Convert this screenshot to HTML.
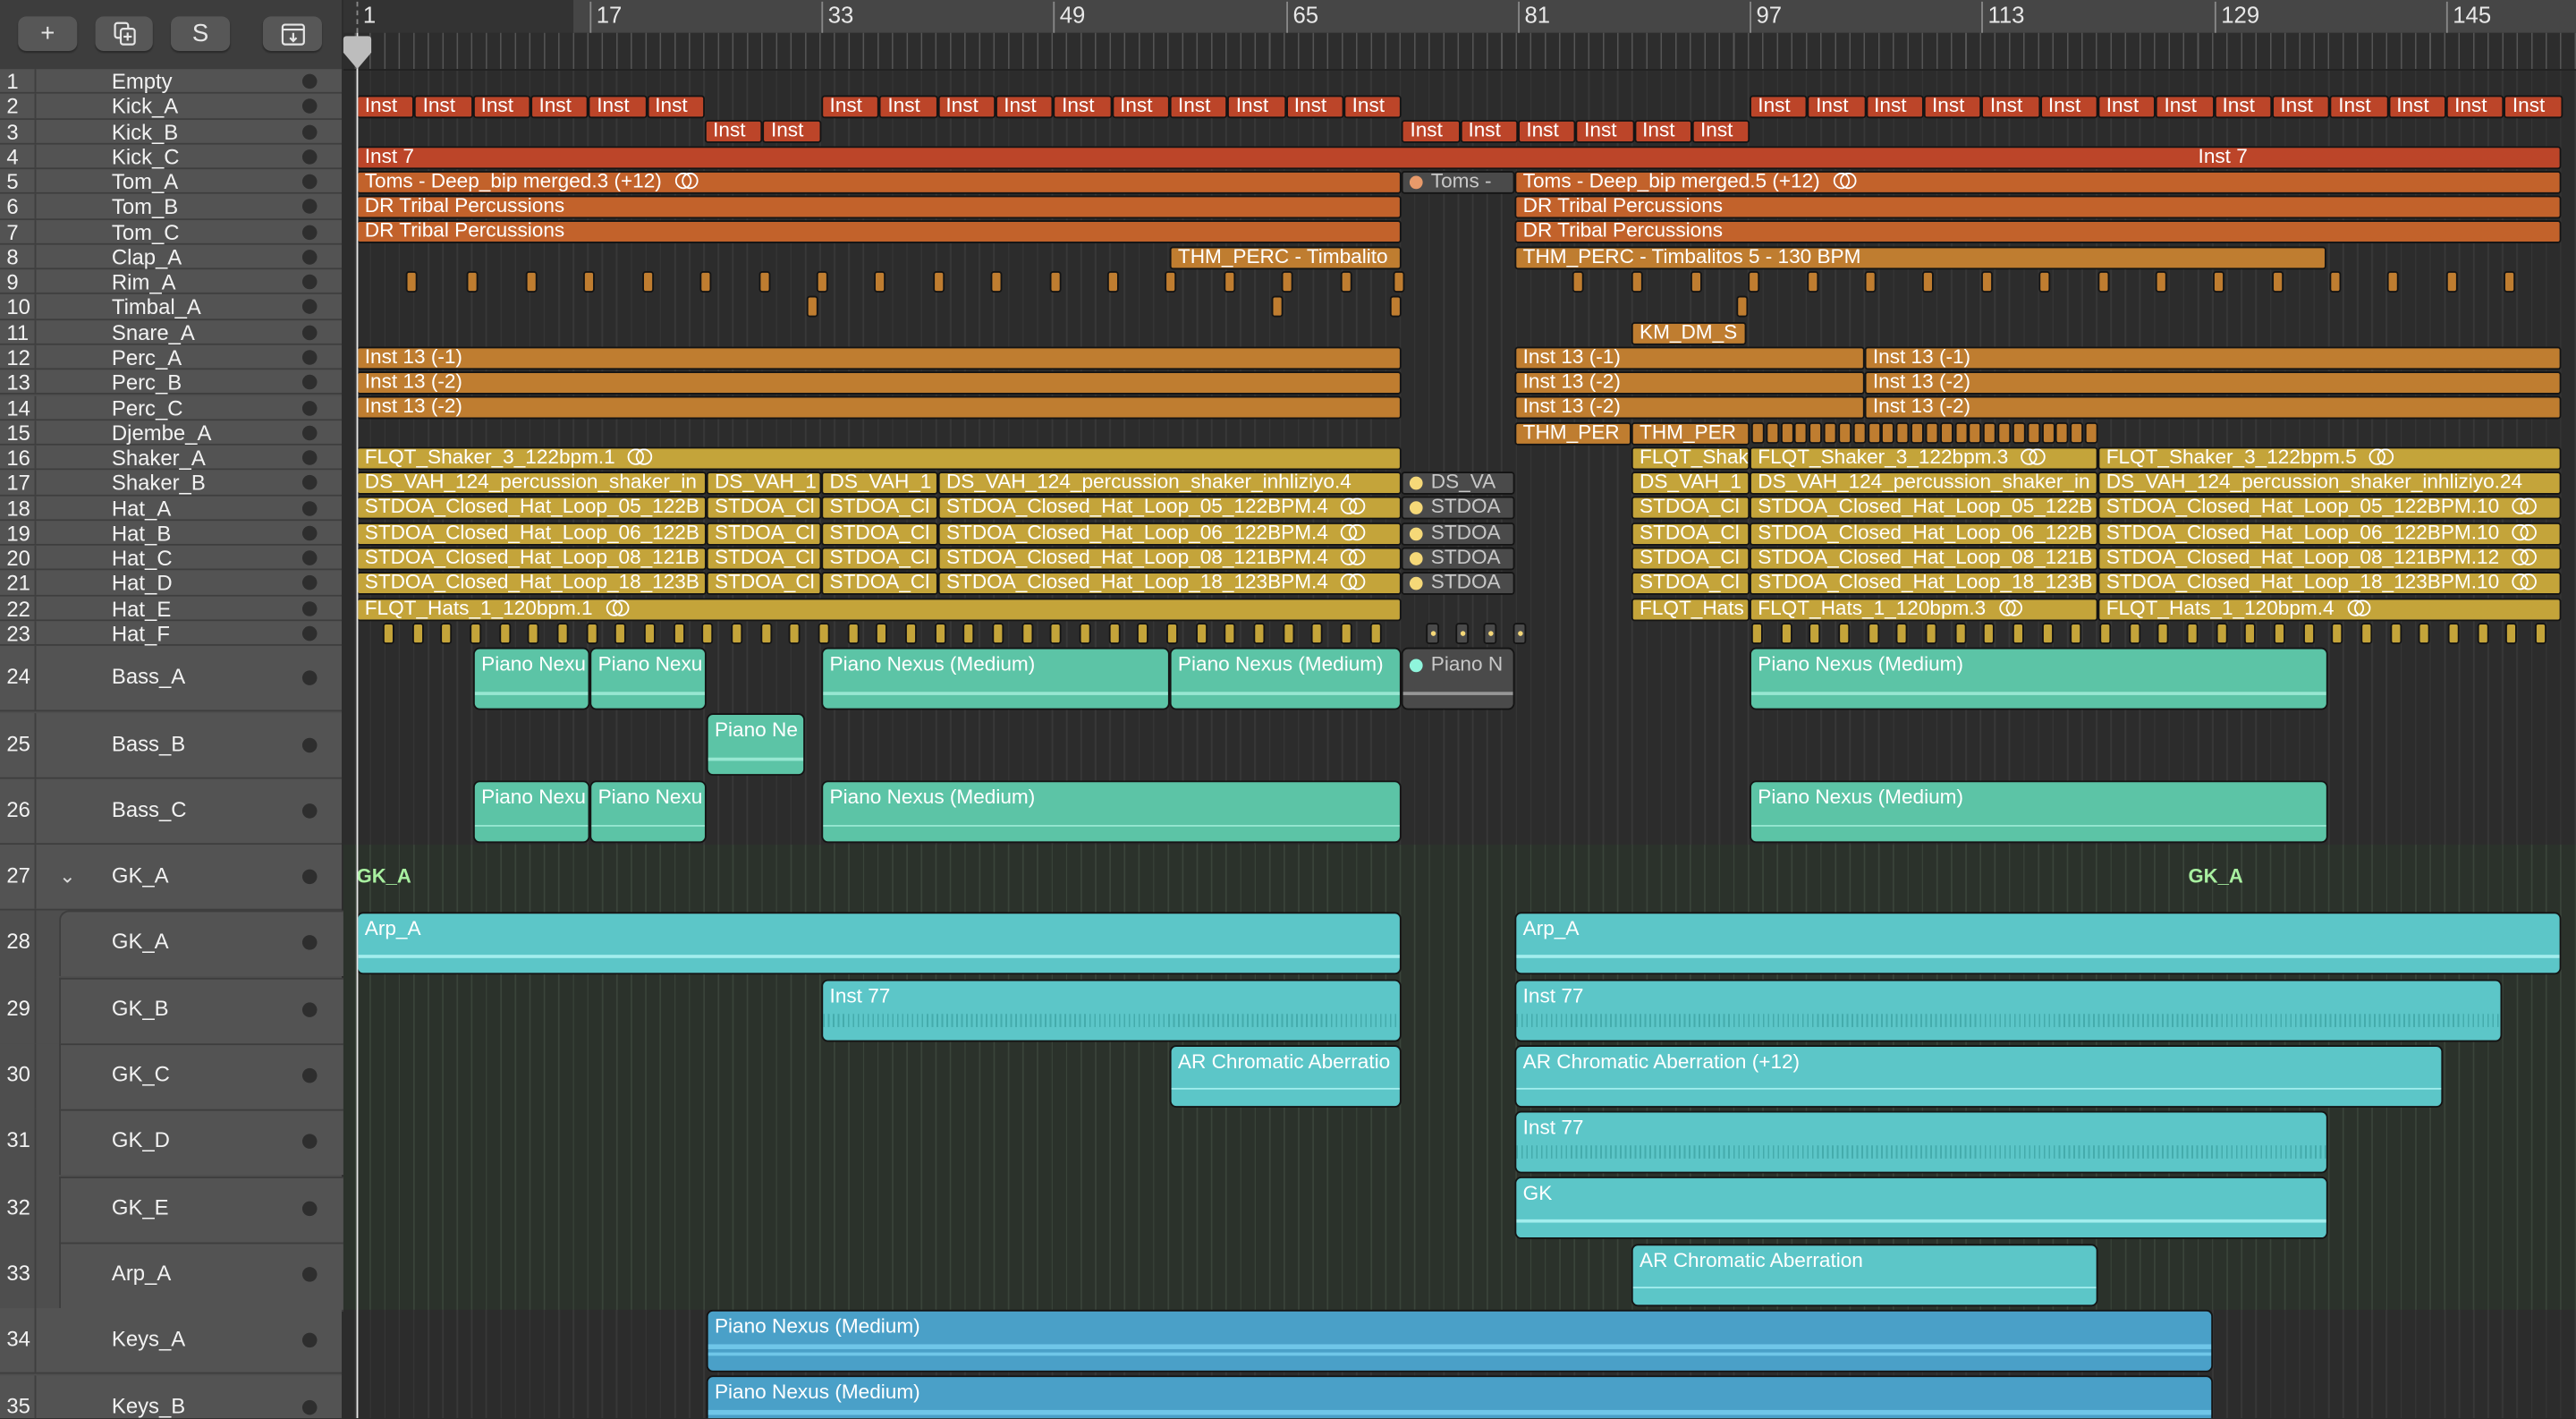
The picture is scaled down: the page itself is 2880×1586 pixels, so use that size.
<!DOCTYPE html>
<html><head><meta charset="utf-8">
<style>
html,body{margin:0;padding:0;background:#2b2b2b;width:2880px;height:1586px;overflow:hidden}
#w{position:absolute;left:0;top:0;width:1568px;height:863px;transform:scale(1.83673);transform-origin:0 0;font-family:"Liberation Sans",sans-serif;overflow:hidden}
#arr{position:absolute;left:208px;top:42px;width:1360px;height:821px;background-color:#2c2c2c;background-image:repeating-linear-gradient(90deg,transparent 0 8px,#383838 8px 8.83px);background-position:9px 0}
#gk{position:absolute;left:208px;top:514px;width:1360px;height:282.5px;background-color:#2b322b;background-image:repeating-linear-gradient(90deg,transparent 0 8px,#3a443a 8px 8.83px);background-position:9px 0}
#lp{position:absolute;left:0;top:0;width:208px;height:863px;background:#4e4e4e;border-right:1px solid #2a2a2a}
#tb{position:absolute;left:0;top:0;width:208px;height:42px;background:#3d3d3d;border-bottom:1px solid #2f2f2f}
.btn{position:absolute;top:10px;height:21px;background:#575757;border-radius:5px;color:#e6e6e6;text-align:center;font-size:15px;line-height:21px;box-shadow:0 1px 1px #0005}
.tr{position:absolute;left:0;width:208px;color:#f2f2f2;font-size:13px}
.tr .n{position:absolute;left:0;width:22px;height:100%;text-align:left;padding-left:4px;box-sizing:border-box;border-right:1px solid #3f3f3f}
.tr .nm{position:absolute;left:68px}
.tr .d{position:absolute;left:184px;width:9px;height:9px;border-radius:50%;background:#2e2e2e}
.tr{border-bottom:1px solid #3e3e3e;box-sizing:border-box;background:#535353}
#rul1{position:absolute;left:208px;top:0;width:1360px;height:20px;background:#333}
#rul1b{position:absolute;left:349px;top:0;width:1219px;height:20px;background:#464646}
#rul2{position:absolute;left:208px;top:20px;width:1360px;height:22px;background:#2d2d2d;background-image:repeating-linear-gradient(90deg,transparent 0 8px,#555 8px 8.83px);background-position:9px 0;border-bottom:1px solid #222}
.bn{position:absolute;top:1px;color:#e8e8e8;font-size:14px;padding-left:3px;border-left:1px solid #888;height:19px;line-height:16px}
.c{position:absolute;box-sizing:border-box;border:1px solid #141414;border-radius:2px;color:#fff;font-size:12.3px;line-height:11px;padding-left:4px;white-space:nowrap;overflow:hidden}
.s{height:14px}
.b{height:38px;border-radius:4px;padding-top:3px;line-height:12.5px}
.R{background:#bc4529}.T{background:#c2622b}.P{background:#bf7d30}.G{background:#c4a43a}
.M{background:#4a4a4a;color:#c8c8c8}.V{background:#5cc4a6}.C{background:#5cc6c8}.K{background:#4aa0c8}
.tk{position:absolute;width:7px;height:13px;border:1px solid #141414;border-radius:2px;box-sizing:border-box}
.wv{position:absolute;left:0;right:0;height:1.5px;background:#a6f0dc;opacity:.8}
.dot{display:inline-block;width:8px;height:8px;border-radius:50%;margin-right:5px;vertical-align:-1px}
.lp{display:inline-block;position:relative;width:15px;height:10px;margin-left:8px;vertical-align:-1px}
.lp:before,.lp:after{content:"";position:absolute;top:0;width:8px;height:8px;border:1.2px solid #fff;border-radius:50%}
.lp:before{left:0}.lp:after{left:4.5px}
</style></head><body><div id="w">
<div id="arr"></div>
<div id="gk"></div>
<div id="rul1"></div><div id="rul1b"></div><div id="rul2"></div>
<div class="bn" style="left:217px;border-left:1px dashed #888">1</div>
<div class="bn" style="left:359px">17</div>
<div class="bn" style="left:500px">33</div>
<div class="bn" style="left:641px">49</div>
<div class="bn" style="left:783px">65</div>
<div class="bn" style="left:924px">81</div>
<div class="bn" style="left:1065px">97</div>
<div class="bn" style="left:1206px">113</div>
<div class="bn" style="left:1348px">129</div>
<div class="bn" style="left:1489px">145</div>

<div id="lp"></div>
<div id="tb">
<div class="btn" style="left:11px;width:36px">+</div>
<div class="btn" style="left:58px;width:35px"><svg width="14" height="15" viewBox="0 0 14 15" style="margin-top:3px"><rect x="1" y="1" width="8" height="9" rx="1.5" fill="none" stroke="#e6e6e6" stroke-width="1.2"/><rect x="4.5" y="4.5" width="8.5" height="9.5" rx="1.5" fill="#575757" stroke="#e6e6e6" stroke-width="1.2"/><path d="M8.7 6.8v5M6.2 9.3h5" stroke="#e6e6e6" stroke-width="1.2"/></svg></div>
<div class="btn" style="left:104px;width:36px">S</div>
<div class="btn" style="left:160px;width:36px"><svg width="15" height="14" viewBox="0 0 15 14" style="margin-top:4px"><rect x="1" y="1" width="13" height="12" rx="1.5" fill="none" stroke="#e6e6e6" stroke-width="1.2"/><path d="M1 4h13M7.5 6v5M5.5 9l2 2 2-2" fill="none" stroke="#e6e6e6" stroke-width="1.2"/></svg></div>
</div>

<div class="tr" style="top:42px;height:15.3px"><span class="n">1</span><span class="nm">Empty</span><span class="d" style="top:3px"></span></div>
<div class="tr" style="top:57.3px;height:15.3px"><span class="n">2</span><span class="nm">Kick_A</span><span class="d" style="top:3px"></span></div>
<div class="tr" style="top:72.5px;height:15.3px"><span class="n">3</span><span class="nm">Kick_B</span><span class="d" style="top:3px"></span></div>
<div class="tr" style="top:87.8px;height:15.3px"><span class="n">4</span><span class="nm">Kick_C</span><span class="d" style="top:3px"></span></div>
<div class="tr" style="top:103.1px;height:15.3px"><span class="n">5</span><span class="nm">Tom_A</span><span class="d" style="top:3px"></span></div>
<div class="tr" style="top:118.4px;height:15.3px"><span class="n">6</span><span class="nm">Tom_B</span><span class="d" style="top:3px"></span></div>
<div class="tr" style="top:133.6px;height:15.3px"><span class="n">7</span><span class="nm">Tom_C</span><span class="d" style="top:3px"></span></div>
<div class="tr" style="top:148.9px;height:15.3px"><span class="n">8</span><span class="nm">Clap_A</span><span class="d" style="top:3px"></span></div>
<div class="tr" style="top:164.2px;height:15.3px"><span class="n">9</span><span class="nm">Rim_A</span><span class="d" style="top:3px"></span></div>
<div class="tr" style="top:179.4px;height:15.3px"><span class="n">10</span><span class="nm">Timbal_A</span><span class="d" style="top:3px"></span></div>
<div class="tr" style="top:194.7px;height:15.3px"><span class="n">11</span><span class="nm">Snare_A</span><span class="d" style="top:3px"></span></div>
<div class="tr" style="top:210px;height:15.3px"><span class="n">12</span><span class="nm">Perc_A</span><span class="d" style="top:3px"></span></div>
<div class="tr" style="top:225.2px;height:15.3px"><span class="n">13</span><span class="nm">Perc_B</span><span class="d" style="top:3px"></span></div>
<div class="tr" style="top:240.5px;height:15.3px"><span class="n">14</span><span class="nm">Perc_C</span><span class="d" style="top:3px"></span></div>
<div class="tr" style="top:255.8px;height:15.3px"><span class="n">15</span><span class="nm">Djembe_A</span><span class="d" style="top:3px"></span></div>
<div class="tr" style="top:271.1px;height:15.3px"><span class="n">16</span><span class="nm">Shaker_A</span><span class="d" style="top:3px"></span></div>
<div class="tr" style="top:286.3px;height:15.3px"><span class="n">17</span><span class="nm">Shaker_B</span><span class="d" style="top:3px"></span></div>
<div class="tr" style="top:301.6px;height:15.3px"><span class="n">18</span><span class="nm">Hat_A</span><span class="d" style="top:3px"></span></div>
<div class="tr" style="top:316.9px;height:15.3px"><span class="n">19</span><span class="nm">Hat_B</span><span class="d" style="top:3px"></span></div>
<div class="tr" style="top:332.1px;height:15.3px"><span class="n">20</span><span class="nm">Hat_C</span><span class="d" style="top:3px"></span></div>
<div class="tr" style="top:347.4px;height:15.3px"><span class="n">21</span><span class="nm">Hat_D</span><span class="d" style="top:3px"></span></div>
<div class="tr" style="top:362.7px;height:15.3px"><span class="n">22</span><span class="nm">Hat_E</span><span class="d" style="top:3px"></span></div>
<div class="tr" style="top:377.9px;height:15.3px"><span class="n">23</span><span class="nm">Hat_F</span><span class="d" style="top:3px"></span></div>
<div class="tr" style="top:393.2px;height:40.3px;line-height:38px"><span class="n">24</span><span class="nm">Bass_A</span><span class="d" style="top:15px"></span></div>
<div class="tr" style="top:433.5px;height:40.3px;line-height:38px"><span class="n">25</span><span class="nm">Bass_B</span><span class="d" style="top:15px"></span></div>
<div class="tr" style="top:473.8px;height:40.3px;line-height:38px"><span class="n">26</span><span class="nm">Bass_C</span><span class="d" style="top:15px"></span></div>
<div class="tr" style="top:514.1px;height:40.3px;line-height:38px"><span class="n">27</span><span style="position:absolute;left:36px;font-size:12px;color:#ddd">&#8964;</span><span class="nm">GK_A</span><span class="d" style="top:15px"></span></div>
<div class="tr" style="top:554.4px;height:40.3px;line-height:38px;background:#4e4e4e;border:0"><span class="n">28</span><span style="position:absolute;left:36px;top:0;width:172px;height:39px;background:#535353;border-top:1px solid #3e3e3e;border-left:1px solid #3e3e3e;border-radius:6px 0 0 0"></span><span class="nm">GK_A</span><span class="d" style="top:15px"></span></div>
<div class="tr" style="top:594.7px;height:40.3px;line-height:38px;background:#4e4e4e;border:0"><span class="n">29</span><span style="position:absolute;left:36px;top:0;width:172px;height:39px;background:#535353;border-top:1px solid #3e3e3e;border-left:1px solid #3e3e3e"></span><span class="nm">GK_B</span><span class="d" style="top:15px"></span></div>
<div class="tr" style="top:635px;height:40.3px;line-height:38px;background:#4e4e4e;border:0"><span class="n">30</span><span style="position:absolute;left:36px;top:0;width:172px;height:39px;background:#535353;border-top:1px solid #3e3e3e;border-left:1px solid #3e3e3e"></span><span class="nm">GK_C</span><span class="d" style="top:15px"></span></div>
<div class="tr" style="top:675.3px;height:40.3px;line-height:38px;background:#4e4e4e;border:0"><span class="n">31</span><span style="position:absolute;left:36px;top:0;width:172px;height:39px;background:#535353;border-top:1px solid #3e3e3e;border-left:1px solid #3e3e3e"></span><span class="nm">GK_D</span><span class="d" style="top:15px"></span></div>
<div class="tr" style="top:715.6px;height:40.3px;line-height:38px;background:#4e4e4e;border:0"><span class="n">32</span><span style="position:absolute;left:36px;top:0;width:172px;height:39px;background:#535353;border-top:1px solid #3e3e3e;border-left:1px solid #3e3e3e"></span><span class="nm">GK_E</span><span class="d" style="top:15px"></span></div>
<div class="tr" style="top:755.9px;height:40.3px;line-height:38px;background:#4e4e4e;border:0"><span class="n">33</span><span style="position:absolute;left:36px;top:0;width:172px;height:40px;background:#535353;border-top:1px solid #3e3e3e;border-left:1px solid #3e3e3e;border-bottom:1px solid #3e3e3e"></span><span class="nm">Arp_A</span><span class="d" style="top:15px"></span></div>
<div class="tr" style="top:796.2px;height:40.3px;line-height:38px"><span class="n">34</span><span class="nm">Keys_A</span><span class="d" style="top:15px"></span></div>
<div class="tr" style="top:836.5px;height:40.3px;line-height:38px"><span class="n">35</span><span class="nm">Keys_B</span><span class="d" style="top:15px"></span></div>

<div class="c s R" style="top:58px;left:217px;width:35.4px">Inst</div>
<div class="c s R" style="top:58px;left:252.3px;width:35.4px">Inst</div>
<div class="c s R" style="top:58px;left:287.7px;width:35.4px">Inst</div>
<div class="c s R" style="top:58px;left:323px;width:35.4px">Inst</div>
<div class="c s R" style="top:58px;left:358.3px;width:35.4px">Inst</div>
<div class="c s R" style="top:58px;left:393.7px;width:35.4px">Inst</div>
<div class="c s R" style="top:58px;left:500px;width:35.4px">Inst</div>
<div class="c s R" style="top:58px;left:535.3px;width:35.4px">Inst</div>
<div class="c s R" style="top:58px;left:570.7px;width:35.4px">Inst</div>
<div class="c s R" style="top:58px;left:606px;width:35.4px">Inst</div>
<div class="c s R" style="top:58px;left:641.3px;width:35.4px">Inst</div>
<div class="c s R" style="top:58px;left:676.7px;width:35.4px">Inst</div>
<div class="c s R" style="top:58px;left:712px;width:35.4px">Inst</div>
<div class="c s R" style="top:58px;left:747.3px;width:35.4px">Inst</div>
<div class="c s R" style="top:58px;left:782.7px;width:35.4px">Inst</div>
<div class="c s R" style="top:58px;left:818px;width:35.4px">Inst</div>
<div class="c s R" style="top:58px;left:1065px;width:35.4px">Inst</div>
<div class="c s R" style="top:58px;left:1100.3px;width:35.4px">Inst</div>
<div class="c s R" style="top:58px;left:1135.7px;width:35.4px">Inst</div>
<div class="c s R" style="top:58px;left:1171px;width:35.4px">Inst</div>
<div class="c s R" style="top:58px;left:1206.3px;width:35.4px">Inst</div>
<div class="c s R" style="top:58px;left:1241.7px;width:35.4px">Inst</div>
<div class="c s R" style="top:58px;left:1277px;width:35.4px">Inst</div>
<div class="c s R" style="top:58px;left:1312.3px;width:35.4px">Inst</div>
<div class="c s R" style="top:58px;left:1347.7px;width:35.4px">Inst</div>
<div class="c s R" style="top:58px;left:1383px;width:35.4px">Inst</div>
<div class="c s R" style="top:58px;left:1418.3px;width:35.4px">Inst</div>
<div class="c s R" style="top:58px;left:1453.7px;width:35.4px">Inst</div>
<div class="c s R" style="top:58px;left:1489px;width:35.4px">Inst</div>
<div class="c s R" style="top:58px;left:1524.3px;width:35.4px">Inst</div>
<div class="c s R" style="top:73.3px;left:429px;width:35.4px">Inst</div>
<div class="c s R" style="top:73.3px;left:464.3px;width:35.4px">Inst</div>
<div class="c s R" style="top:73.3px;left:853.3px;width:35.4px">Inst</div>
<div class="c s R" style="top:73.3px;left:888.7px;width:35.4px">Inst</div>
<div class="c s R" style="top:73.3px;left:924px;width:35.4px">Inst</div>
<div class="c s R" style="top:73.3px;left:959.3px;width:35.4px">Inst</div>
<div class="c s R" style="top:73.3px;left:994.7px;width:35.4px">Inst</div>
<div class="c s R" style="top:73.3px;left:1030px;width:35.4px">Inst</div>
<div class="c s R" style="top:88.6px;left:217px;width:1342px">Inst 7<span style="position:absolute;left:1120px">Inst 7</span></div>
<div class="c s T" style="top:103.9px;left:217px;width:636px">Toms - Deep_bip merged.3 (+12)<span class="lp"></span></div>
<div class="c s M" style="top:103.9px;left:853px;width:69px"><span class="dot" style="background:#e89a6a"></span>Toms -</div>
<div class="c s T" style="top:103.9px;left:922px;width:637px">Toms - Deep_bip merged.5 (+12)<span class="lp"></span></div>
<div class="c s T" style="top:119.2px;left:217px;width:636px">DR Tribal Percussions</div>
<div class="c s T" style="top:119.2px;left:922px;width:637px">DR Tribal Percussions</div>
<div class="c s T" style="top:134.4px;left:217px;width:636px">DR Tribal Percussions</div>
<div class="c s T" style="top:134.4px;left:922px;width:637px">DR Tribal Percussions</div>
<div class="c s P" style="top:149.7px;left:712px;width:141px">THM_PERC - Timbalito</div>
<div class="c s P" style="top:149.7px;left:922px;width:494px">THM_PERC - Timbalitos 5 - 130 BPM</div>
<div id="r9"></div>
<div class="tk P" style="top:180.2px;left:491px"></div>
<div class="tk P" style="top:180.2px;left:774px"></div>
<div class="tk P" style="top:180.2px;left:846px"></div>
<div class="tk P" style="top:180.2px;left:1057px"></div>
<div class="c s P" style="top:195.5px;left:993px;width:70px">KM_DM_S</div>
<div class="c s P" style="top:210.8px;left:217px;width:636px">Inst 13 (-1)</div>
<div class="c s P" style="top:210.8px;left:922px;width:213px">Inst 13 (-1)</div>
<div class="c s P" style="top:210.8px;left:1135px;width:424px">Inst 13 (-1)</div>
<div class="c s P" style="top:226px;left:217px;width:636px">Inst 13 (-2)</div>
<div class="c s P" style="top:226px;left:922px;width:213px">Inst 13 (-2)</div>
<div class="c s P" style="top:226px;left:1135px;width:424px">Inst 13 (-2)</div>
<div class="c s P" style="top:241.3px;left:217px;width:636px">Inst 13 (-2)</div>
<div class="c s P" style="top:241.3px;left:922px;width:213px">Inst 13 (-2)</div>
<div class="c s P" style="top:241.3px;left:1135px;width:424px">Inst 13 (-2)</div>
<div class="c s P" style="top:256.6px;left:922px;width:71px">THM_PER</div>
<div class="c s P" style="top:256.6px;left:993px;width:72px">THM_PER</div>
<div id="r15"></div>
<div class="c s G" style="top:271.9px;left:217px;width:636px">FLQT_Shaker_3_122bpm.1<span class="lp"></span></div>
<div class="c s G" style="top:271.9px;left:993px;width:72px">FLQT_Shak</div>
<div class="c s G" style="top:271.9px;left:1065px;width:212px">FLQT_Shaker_3_122bpm.3<span class="lp"></span></div>
<div class="c s G" style="top:271.9px;left:1277px;width:282px">FLQT_Shaker_3_122bpm.5<span class="lp"></span></div>
<div class="c s G" style="top:287.1px;left:217px;width:213px">DS_VAH_124_percussion_shaker_in</div>
<div class="c s G" style="top:287.1px;left:430px;width:70px">DS_VAH_1</div>
<div class="c s G" style="top:287.1px;left:500px;width:71px">DS_VAH_1</div>
<div class="c s G" style="top:287.1px;left:571px;width:282px">DS_VAH_124_percussion_shaker_inhliziyo.4</div>
<div class="c s M" style="top:287.1px;left:853px;width:69px"><span class="dot" style="background:#f5d878"></span>DS_VA</div>
<div class="c s G" style="top:287.1px;left:993px;width:72px">DS_VAH_1</div>
<div class="c s G" style="top:287.1px;left:1065px;width:212px">DS_VAH_124_percussion_shaker_in</div>
<div class="c s G" style="top:287.1px;left:1277px;width:282px">DS_VAH_124_percussion_shaker_inhliziyo.24</div>
<div class="c s G" style="top:302.4px;left:217px;width:213px">STDOA_Closed_Hat_Loop_05_122B</div>
<div class="c s G" style="top:302.4px;left:430px;width:70px">STDOA_Cl</div>
<div class="c s G" style="top:302.4px;left:500px;width:71px">STDOA_Cl</div>
<div class="c s G" style="top:302.4px;left:571px;width:282px">STDOA_Closed_Hat_Loop_05_122BPM.4<span class="lp"></span></div>
<div class="c s M" style="top:302.4px;left:853px;width:69px"><span class="dot" style="background:#f5d878"></span>STDOA</div>
<div class="c s G" style="top:302.4px;left:993px;width:72px">STDOA_Cl</div>
<div class="c s G" style="top:302.4px;left:1065px;width:212px">STDOA_Closed_Hat_Loop_05_122B</div>
<div class="c s G" style="top:302.4px;left:1277px;width:282px">STDOA_Closed_Hat_Loop_05_122BPM.10<span class="lp"></span></div>
<div class="c s G" style="top:317.7px;left:217px;width:213px">STDOA_Closed_Hat_Loop_06_122B</div>
<div class="c s G" style="top:317.7px;left:430px;width:70px">STDOA_Cl</div>
<div class="c s G" style="top:317.7px;left:500px;width:71px">STDOA_Cl</div>
<div class="c s G" style="top:317.7px;left:571px;width:282px">STDOA_Closed_Hat_Loop_06_122BPM.4<span class="lp"></span></div>
<div class="c s M" style="top:317.7px;left:853px;width:69px"><span class="dot" style="background:#f5d878"></span>STDOA</div>
<div class="c s G" style="top:317.7px;left:993px;width:72px">STDOA_Cl</div>
<div class="c s G" style="top:317.7px;left:1065px;width:212px">STDOA_Closed_Hat_Loop_06_122B</div>
<div class="c s G" style="top:317.7px;left:1277px;width:282px">STDOA_Closed_Hat_Loop_06_122BPM.10<span class="lp"></span></div>
<div class="c s G" style="top:332.9px;left:217px;width:213px">STDOA_Closed_Hat_Loop_08_121B</div>
<div class="c s G" style="top:332.9px;left:430px;width:70px">STDOA_Cl</div>
<div class="c s G" style="top:332.9px;left:500px;width:71px">STDOA_Cl</div>
<div class="c s G" style="top:332.9px;left:571px;width:282px">STDOA_Closed_Hat_Loop_08_121BPM.4<span class="lp"></span></div>
<div class="c s M" style="top:332.9px;left:853px;width:69px"><span class="dot" style="background:#f5d878"></span>STDOA</div>
<div class="c s G" style="top:332.9px;left:993px;width:72px">STDOA_Cl</div>
<div class="c s G" style="top:332.9px;left:1065px;width:212px">STDOA_Closed_Hat_Loop_08_121B</div>
<div class="c s G" style="top:332.9px;left:1277px;width:282px">STDOA_Closed_Hat_Loop_08_121BPM.12<span class="lp"></span></div>
<div class="c s G" style="top:348.2px;left:217px;width:213px">STDOA_Closed_Hat_Loop_18_123B</div>
<div class="c s G" style="top:348.2px;left:430px;width:70px">STDOA_Cl</div>
<div class="c s G" style="top:348.2px;left:500px;width:71px">STDOA_Cl</div>
<div class="c s G" style="top:348.2px;left:571px;width:282px">STDOA_Closed_Hat_Loop_18_123BPM.4<span class="lp"></span></div>
<div class="c s M" style="top:348.2px;left:853px;width:69px"><span class="dot" style="background:#f5d878"></span>STDOA</div>
<div class="c s G" style="top:348.2px;left:993px;width:72px">STDOA_Cl</div>
<div class="c s G" style="top:348.2px;left:1065px;width:212px">STDOA_Closed_Hat_Loop_18_123B</div>
<div class="c s G" style="top:348.2px;left:1277px;width:282px">STDOA_Closed_Hat_Loop_18_123BPM.10<span class="lp"></span></div>
<div class="c s G" style="top:363.5px;left:217px;width:636px">FLQT_Hats_1_120bpm.1<span class="lp"></span></div>
<div class="c s G" style="top:363.5px;left:993px;width:72px">FLQT_Hats</div>
<div class="c s G" style="top:363.5px;left:1065px;width:212px">FLQT_Hats_1_120bpm.3<span class="lp"></span></div>
<div class="c s G" style="top:363.5px;left:1277px;width:282px">FLQT_Hats_1_120bpm.4<span class="lp"></span></div>
<div id="r23"></div>

<div class="c b V" style="top:394px;left:288px;width:71px">Piano Nexu<div class="wv" style="top:26px"></div></div>
<div class="c b V" style="top:394px;left:359px;width:71px">Piano Nexu<div class="wv" style="top:26px"></div></div>
<div class="c b V" style="top:394px;left:500px;width:212px">Piano Nexus (Medium)<div class="wv" style="top:26px"></div></div>
<div class="c b V" style="top:394px;left:712px;width:141px">Piano Nexus (Medium)<div class="wv" style="top:26px"></div></div>
<div class="c b M" style="top:394px;left:853px;width:69px"><span class="dot" style="background:#8ff5dc"></span>Piano N<div class="wv" style="top:26px;background:#aaa"></div></div>
<div class="c b V" style="top:394px;left:1065px;width:352px">Piano Nexus (Medium)<div class="wv" style="top:26px"></div></div>
<div class="c b V" style="top:434.3px;left:430px;width:60px">Piano Ne<div class="wv" style="top:26px"></div></div>
<div class="c b V" style="top:474.6px;left:288px;width:71px">Piano Nexu<div class="wv" style="top:26px"></div></div>
<div class="c b V" style="top:474.6px;left:359px;width:71px">Piano Nexu<div class="wv" style="top:26px"></div></div>
<div class="c b V" style="top:474.6px;left:500px;width:353px">Piano Nexus (Medium)<div class="wv" style="top:26px"></div></div>
<div class="c b V" style="top:474.6px;left:1065px;width:352px">Piano Nexus (Medium)<div class="wv" style="top:26px"></div></div>
<div style="position:absolute;top:526px;left:217px;color:#a8f0a0;font-size:12px;font-weight:bold">GK_A</div>
<div style="position:absolute;top:526px;left:1332px;color:#a8f0a0;font-size:12px;font-weight:bold">GK_A</div>
<div class="c b C" style="top:555.2px;left:217px;width:636px">Arp_A<div class="wv" style="top:25px;background:#b4f6f6"></div></div>
<div class="c b C" style="top:555.2px;left:922px;width:637px">Arp_A<div class="wv" style="top:25px;background:#b4f6f6"></div></div>
<div class="c b C" style="top:595.5px;left:500px;width:353px">Inst 77<div class="wv" style="top:20px;height:8px;background:repeating-linear-gradient(90deg,#3aa0a0 0 1px,transparent 1px 3px);opacity:.7"></div></div>
<div class="c b C" style="top:595.5px;left:922px;width:601px">Inst 77<div class="wv" style="top:20px;height:8px;background:repeating-linear-gradient(90deg,#3aa0a0 0 1px,transparent 1px 3px);opacity:.7"></div></div>
<div class="c b C" style="top:635.8px;left:712px;width:141px">AR Chromatic Aberratio<div class="wv" style="top:25px;background:#b4f6f6"></div></div>
<div class="c b C" style="top:635.8px;left:922px;width:565px">AR Chromatic Aberration (+12)<div class="wv" style="top:25px;background:#b4f6f6"></div></div>
<div class="c b C" style="top:676.1px;left:922px;width:495px">Inst 77<div class="wv" style="top:20px;height:8px;background:repeating-linear-gradient(90deg,#3aa0a0 0 1px,transparent 1px 3px);opacity:.7"></div></div>
<div class="c b C" style="top:716.4px;left:922px;width:495px">GK<div class="wv" style="top:25px;background:#b4f6f6"></div></div>
<div class="c b C" style="top:756.7px;left:993px;width:284px">AR Chromatic Aberration<div class="wv" style="top:25px;background:#b4f6f6"></div></div>
<div class="c b K" style="top:797px;left:430px;width:917px">Piano Nexus (Medium)<div class="wv" style="top:20px;height:3px;background:#78d0f0"></div><div class="wv" style="top:25px;background:#78d0f0"></div></div>
<div class="c b K" style="top:837.3px;left:430px;width:917px">Piano Nexus (Medium)<div class="wv" style="top:20px;height:3px;background:#78d0f0"></div><div class="wv" style="top:25px;background:#78d0f0"></div></div>

<div style="position:absolute;left:216.5px;top:20px;width:1px;height:843px;background:#e8e8e8"></div>
<svg style="position:absolute;left:208px;top:21px" width="19" height="22" viewBox="0 0 19 22"><path d="M1 3Q1 1 3 1H16Q18 1 18 3V11L9.5 21L1 11Z" fill="#bdbdbd"/></svg>

<script>
function add(id,html){document.getElementById(id).innerHTML=html;}
var h='';
var r9=[247,284,320,355,391,426,462,497,532,568,603,639,674,709,745,780,816,848,957,993,1029,1064,1100,1135,1170,1206,1241,1277,1312,1347,1383,1418,1453,1489,1524];
r9.forEach(function(x){h+='<div class="tk P" style="top:164.9px;left:'+x+'px"></div>';});
add('r9',h);h='';
for(var x=1066;x<1276;x+=8.83){h+='<div class="tk P" style="top:256.6px;left:'+x+'px;width:8px"></div>';}
add('r15',h);h='';
for(var x=233;x<850;x+=17.67){h+='<div class="tk G" style="top:378.7px;left:'+x+'px"></div>';}
[868,886,903,921].forEach(function(x){h+='<div class="tk M" style="top:378.7px;left:'+x+'px;width:8px"><div style="width:3px;height:3px;border-radius:50%;background:#f5d878;margin:4px 0 0 1.5px"></div></div>';});
for(var x=1066;x<1555;x+=17.67){h+='<div class="tk G" style="top:378.7px;left:'+x+'px"></div>';}
add('r23',h);
</script>
</div></body></html>
